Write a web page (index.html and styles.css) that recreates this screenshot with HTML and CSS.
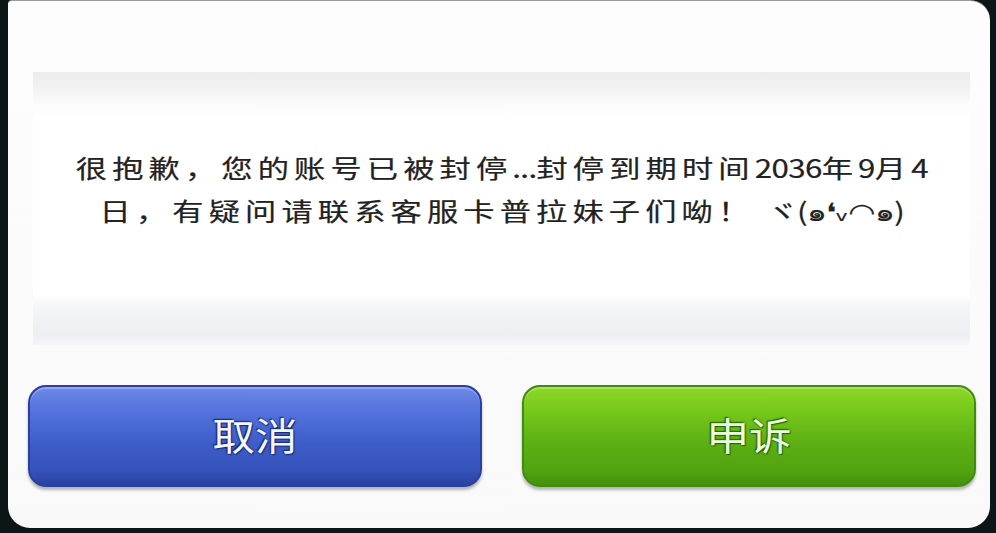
FILE: index.html
```html
<!doctype html>
<html>
<head>
<meta charset="utf-8">
<title>账号封停</title>
<link rel="stylesheet" href="styles.css">
</head>
<body>
<div class="dialog">
	<div class="nachricht">
		<p>很抱歉，您的账号已被封停<span class="eng">...</span>封停到期时间<span class="eng">2036</span>年<span class="eng">9</span>月<span class="eng">4</span><br>日，有疑问请联系客服卡普拉妹子们呦！ <span class="eng">ヾ(๑❛ᵥ◠๑)</span></p>
	</div>
	<div class="knoepfe">
		<button class="knopf blau"><span>取消</span></button>
		<button class="knopf gruen"><span>申诉</span></button>
	</div>
</div>
</body>
</html>
```

FILE: styles.css
```css
* {margin:0; padding:0; box-sizing:border-box; }
html, body {width:996px; height:533px; overflow:hidden; }
body {background-color:#0c1616; padding:0 6px 5px 8px; font-family:"Noto Sans CJK SC","DejaVu Sans",sans-serif; }

.dialog {height:528px; border-radius:4px 20px 22px 22px; border-top:1px solid #9a9a9a; background:linear-gradient(#fdfdfd,#f9f9f9); padding:71px 14px 0 20px; display:flex; flex-direction:column; }

/* Meldungsfeld: oben grauer, unten blaugrauer Verlauf */
.nachricht {height:273px; margin:0 6px 0 5px; display:flex; align-items:center; justify-content:center; background:linear-gradient(#ececec 0, #f3f3f3 18px, #fbfbfb 32px, #fff 45px, #fff 222px, #f6f7f9 232px, #eff1f4 248px, #eceef2 262px, #f5f6f8 273px); }
.nachricht p {font-size:25px; font-weight:400; line-height:43px; letter-spacing:4.1px; color:#222; text-align:center; white-space:nowrap; padding-bottom:40px; transform:scaleX(1.25); -webkit-text-stroke:0.2px #222; }
.nachricht .eng {letter-spacing:-0.5px; }

.knoepfe {display:flex; gap:40px; margin-top:40px; }
.knopf {flex:1; height:102px; border-radius:18px; font-family:"Noto Sans CJK SC",sans-serif; font-size:38px; font-weight:400; padding-bottom:6px; cursor:pointer; box-shadow:0 3px 3px rgba(0,0,0,0.28), inset 0 2px 0 rgba(255,255,255,0.25); }
.knopf span {display:inline-block; transform:scaleX(1.12); }
.blau {border:2px solid #2d3f9c; color:#f2f6ff; background:linear-gradient(#6d8ae8 0, #5876de 20%, #4767d2 42%, #3d5cc6 60%, #3553bb 85%, #2a42a0 100%); text-shadow:0 0 2px #1a2a78, 1px 1px 1px #1a2a78, -1px -1px 1px #1a2a78; }
.gruen {border:2px solid #3f8c10; color:#eaffdc; background:linear-gradient(#8ed726 0, #7acb1d 20%, #68bb18 42%, #5cae14 60%, #52a411 85%, #45910d 100%); text-shadow:0 0 2px #24630a, 1px 1px 1px #24630a, -1px -1px 1px #24630a; }
```
